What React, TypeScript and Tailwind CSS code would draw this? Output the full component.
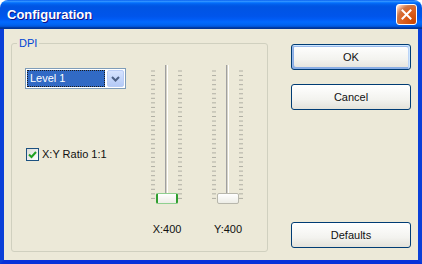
import React from "react";

const font = { fontFamily: '"Liberation Sans", Arial, sans-serif' };

const TICKS = Array.from({ length: 29 }, (_, i) => 5.5 + i * 4.55);

const Slider = ({ label, active }: { label: string; active?: boolean }) => (
  <div className="flex w-[40px] flex-col items-center">
    <div className="relative h-[139px] w-[40px]">
      <svg width="40" height="139" viewBox="0 0 40 139">
        {TICKS.map((y) => (
          <g key={y}>
            <rect x="4" y={y} width="4" height="1" fill="#B0AFA4" />
            <rect x="31" y={y} width="4" height="1" fill="#B0AFA4" />
          </g>
        ))}
        <rect x="18" y="0" width="1" height="138" fill="#A0A0A0" />
        <rect x="19" y="0" width="1" height="138" fill="#D6D3C6" />
        <rect x="20" y="0" width="1" height="138" fill="#FFFFFF" />
      </svg>
      <div
        className={
          active
            ? "absolute left-[9px] top-[128px] h-[11px] w-[22px] rounded-[2px] border-x-2 border-y border-x-[#2F9E2F] border-y-[#8FD08F] bg-[linear-gradient(#FFFFFF,#EDEDE6)]"
            : "absolute left-[9px] top-[128px] h-[11px] w-[22px] rounded-[2px] border border-[#B8B7AC] bg-[linear-gradient(#FFFFFF,#EDEDE6)]"
        }
      />
    </div>
    <span className="mt-[19px] text-[11px] leading-[13px] text-[#111]">{label}</span>
  </div>
);

const Button = ({ children, primary }: { children: React.ReactNode; primary?: boolean }) => (
  <button
    className={
      "h-[26px] w-[120px] rounded-[3px] border border-[#003C74] bg-[linear-gradient(#FFFFFF,#F3F3EF_60%,#E3E2DA)] text-[11px] text-[#111] " +
      (primary ? "shadow-[inset_-1px_1px_#CEE7FF,inset_1px_2px_#98B8EA,inset_-2px_2px_#BCD4F6,inset_1px_-1px_#89ADE4,inset_2px_-2px_#89ADE4]" : "")
    }
  >
    {children}
  </button>
);

export default function App() {
  return (
    <div className="h-[264px] w-[422px] bg-white" style={font}>
      <div className="flex h-full flex-col overflow-hidden rounded-t-[8px]">
        <div className="flex h-[29px] shrink-0 items-center justify-between bg-[linear-gradient(#0058EE_0%,#3593FF_4%,#288EFF_6%,#127DFF_8%,#036FFC_10%,#0262EE_14%,#0057E5_20%,#0054E3_24%,#0055EB_56%,#005BF5_66%,#026AFE_76%,#0062EF_86%,#0052D6_92%,#0040AB_94%,#003092_100%)] pl-[7px] pr-[5px]">
          <span className="text-[13px] font-bold text-white [text-shadow:1px_1px_#0F1089]">Configuration</span>
          <button className="flex h-[21px] w-[21px] items-center justify-center rounded-[3px] border border-white bg-[radial-gradient(circle_at_90%_90%,#CC4600_0%,#DC6527_55%,#CD7546_70%,#FFCCB2_90%,#FFFFFF_100%)]">
            <svg width="11" height="11" viewBox="0 0 11 11">
              <path d="M1.5 1.5 L9.5 9.5 M9.5 1.5 L1.5 9.5" stroke="#fff" strokeWidth="2" strokeLinecap="square" />
            </svg>
          </button>
        </div>
        <div className="flex flex-1 border-x-4 border-b-4 border-x-[#0A3FD8] border-b-[#0831D9] bg-[#ECE9D8]">
          <div className="relative ml-[7px] mt-[14px] h-[209px] w-[257px] rounded-[3px] border border-[#D0D0BF]">
            <span className="absolute left-[5px] top-[-7px] bg-[#ECE9D8] px-[2px] text-[11px] leading-[13px] text-[#0046D5]">DPI</span>
            <div className="flex gap-[21px] pl-[13px] pt-[21px]">
              <div className="flex w-[101px] flex-col pt-[3px]">
                <div className="flex h-[21px] w-[101px] items-center gap-[2px] border border-[#7F9DB9] bg-white p-[1px]">
                  <div className="flex h-[17px] flex-1 items-center border border-dotted border-[#1A1A1A] bg-[#316AC5] pl-[2px] text-[11px] text-white">
                    Level 1
                  </div>
                  <div className="flex h-[17px] w-[17px] items-center justify-center rounded-[2px] border border-[#B9CCF5] bg-[linear-gradient(#D6E3FE,#B4CAF7)]">
                    <svg width="9" height="6" viewBox="0 0 9 6">
                      <path d="M1 1 L4.5 4.5 L8 1" stroke="#4D6185" strokeWidth="2" fill="none" />
                    </svg>
                  </div>
                </div>
                <label className="ml-[1px] mt-[59px] flex items-center gap-[3px] text-[11px] leading-[13px] text-[#111]">
                  <span className="flex h-[13px] w-[13px] items-center justify-center border border-[#1C5180] bg-[linear-gradient(135deg,#DCDCD7,#FFFFFF)]">
                    <svg width="9" height="9" viewBox="0 0 9 9">
                      <path d="M1 4.5 L3.5 7 L8 2" stroke="#21A121" strokeWidth="2" fill="none" />
                    </svg>
                  </span>
                  X:Y Ratio 1:1
                </label>
              </div>
              <Slider label="X:400" active />
              <Slider label="Y:400" />
            </div>
          </div>
          <div className="ml-[23px] flex flex-col pb-[12px] pt-[15px]">
            <Button primary>OK</Button>
            <div className="mt-[14px]">
              <Button>Cancel</Button>
            </div>
            <div className="mt-auto">
              <Button>Defaults</Button>
            </div>
          </div>
        </div>
      </div>
    </div>
  );
}
